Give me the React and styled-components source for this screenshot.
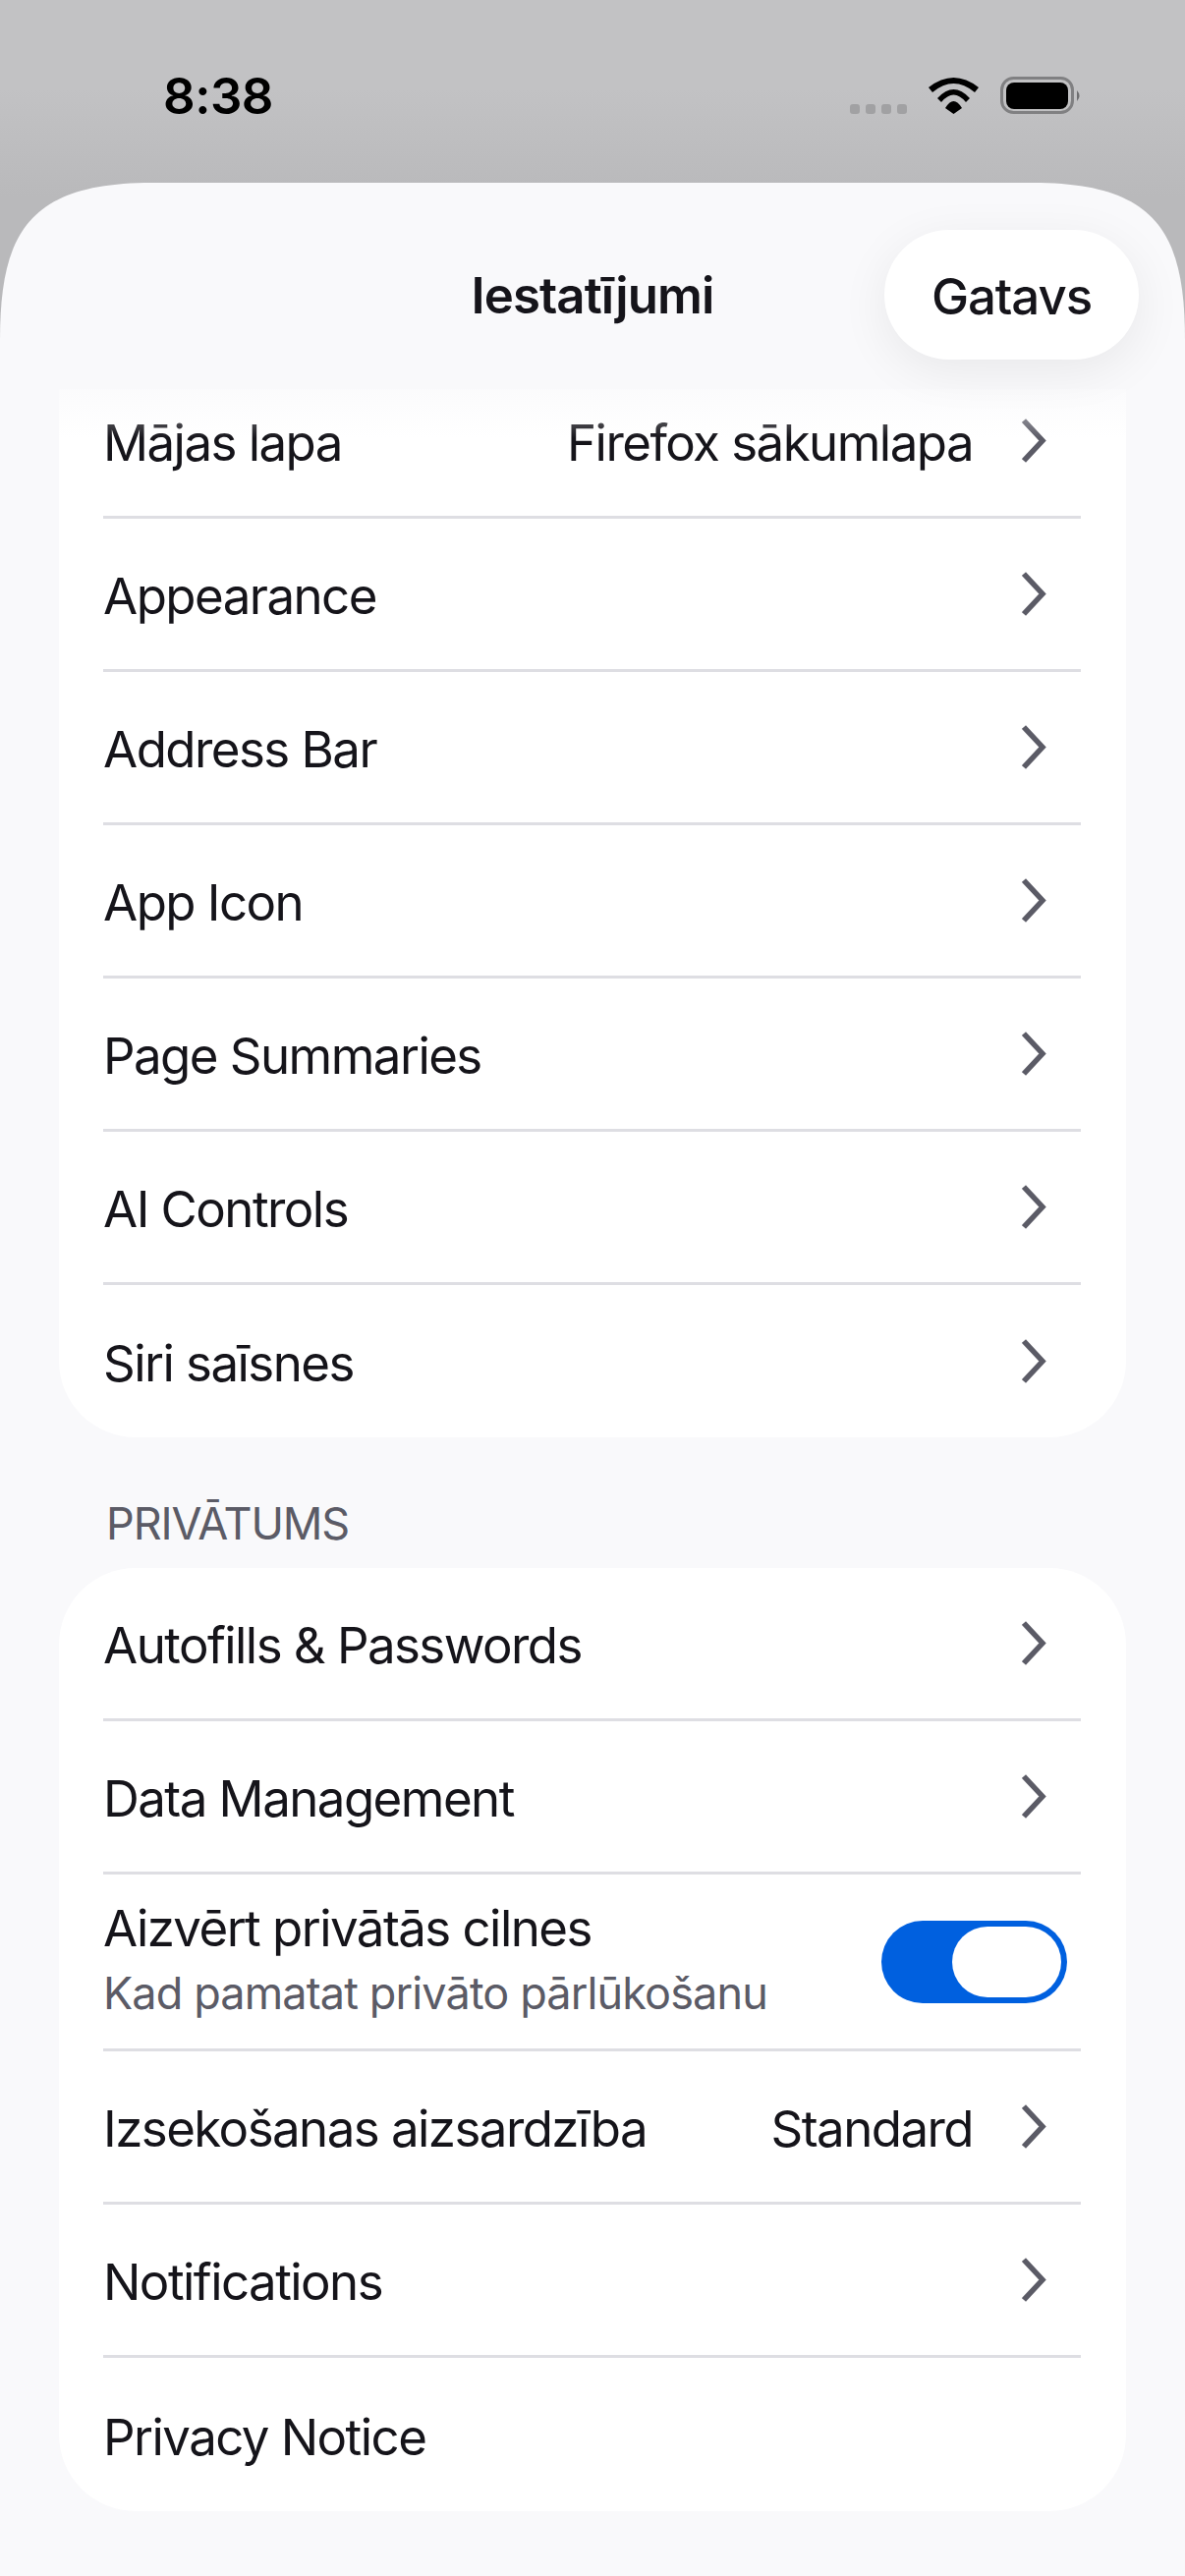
import React from "react";
import styled, { createGlobalStyle } from "styled-components";

const GlobalStyle = createGlobalStyle`
  html, body {
    margin: 0;
    padding: 0;
    background: #f9f9fb;
  }
  body {
    font-family: "Inter", "Liberation Sans", sans-serif;
    -webkit-font-smoothing: antialiased;
  }
`;

const Screen = styled.div`
  position: relative;
  width: 1206px;
  height: 2622px;
  overflow: hidden;
  display: flex;
  flex-direction: column;
  background: linear-gradient(#c2c2c4 0, #c2c2c4 90px, #b9b9bb 200px);
`;

const StatusBar = styled.div`
  height: 186px;
  flex: none;
  box-sizing: border-box;
  padding: 70px 105px 0 166px;
  display: flex;
  justify-content: space-between;
  align-items: flex-start;
`;

const Time = styled.div`
  font-size: 51px;
  font-weight: 600;
  line-height: 56px;
  letter-spacing: -0.5px;
  color: #000;
`;

const StatusIcons = styled.div`
  display: flex;
  align-items: flex-start;
  padding-top: 6px;
`;

// squircle top corners, a plain border-radius is too round here
const Sheet = styled.div`
  position: relative;
  flex: 1;
  min-height: 0;
  display: flex;
  flex-direction: column;
  background: #f9f9fb;
  clip-path: path("M0 160 C0 50 30 0 155 0 H1051 C1176 0 1206 50 1206 160 V2436 H0 Z");
`;

const NavBar = styled.div`
  position: relative;
  z-index: 2;
  flex: none;
  height: 210px;
  box-sizing: border-box;
  padding: 48px 47px 0 0;
  display: flex;
  justify-content: flex-end;
  align-items: flex-start;
`;

const NavTitle = styled.div`
  position: absolute;
  left: 0;
  right: 0;
  top: 85px;
  text-align: center;
  font-size: 51px;
  line-height: 60px;
  font-weight: 600;
  letter-spacing: -0.9px;
  color: #15141a;
`;

const DoneButton = styled.button`
  width: 259px;
  height: 132px;
  border: 0;
  border-radius: 66px;
  background: #fff;
  font-family: inherit;
  font-size: 51px;
  font-weight: 500;
  letter-spacing: -1.1px;
  color: #15141a;
  padding: 2px 0 0;
  box-shadow: 0 12px 50px rgba(0, 0, 0, 0.07);
`;

const Fade = styled.div`
  position: absolute;
  z-index: 1;
  left: 0;
  right: 0;
  top: 210px;
  height: 50px;
  background: linear-gradient(rgba(249, 249, 251, 0.7), rgba(249, 249, 251, 0));
`;

const Content = styled.div`
  flex: 1;
  min-height: 0;
  overflow: hidden;
  padding: 0 60px;
`;

const Card = styled.div`
  background: #fff;
  border-radius: ${(p) => (p.$clipped ? "0 0 78px 78px" : "78px")};
  padding: 0 46px 0 45px;
  margin-top: ${(p) => (p.$clipped ? "-24px" : "0")};
`;

const Row = styled.div`
  height: ${(p) => p.$height || 156}px;
  box-sizing: border-box;
  display: flex;
  align-items: center;
  justify-content: space-between;
  border-bottom: ${(p) => (p.$last ? "0" : "3px solid #dedee3")};
`;

const Label = styled.div`
  font-size: 51px;
  line-height: 60px;
  letter-spacing: -1.55px;
  color: #15141a;
  white-space: nowrap;
  padding-top: ${(p) => (p.$stacked ? "0" : "5px")};
`;

const LabelStack = styled.div`
  display: flex;
  flex-direction: column;
  gap: 9px;
  margin-top: -4px;
`;

const Hint = styled.div`
  font-size: 45px;
  line-height: 54px;
  letter-spacing: -0.87px;
  color: #5b5b66;
  white-space: nowrap;
`;

const Trailing = styled.div`
  display: flex;
  align-items: center;
`;

const Value = styled.div`
  font-size: 51px;
  line-height: 60px;
  letter-spacing: -1.55px;
  color: #15141a;
  white-space: nowrap;
  margin: 5px 50px 0 0;
`;

const ChevronBox = styled.svg`
  display: block;
  width: 25px;
  height: 45px;
  margin-right: 35px;
`;

const SectionTitle = styled.div`
  height: 133px;
  box-sizing: border-box;
  padding: 61px 0 0 48px;
  font-size: 45px;
  line-height: 54px;
  letter-spacing: -1.1px;
  color: #5b5b66;
`;

const Toggle = styled.div`
  width: 189px;
  height: 84px;
  box-sizing: border-box;
  margin-right: 14px;
  padding: 6px;
  border-radius: 42px;
  background: #0060df;
  display: flex;
  justify-content: flex-end;
`;

const Knob = styled.div`
  width: 111px;
  height: 72px;
  border-radius: 36px;
  background: #fff;
`;

function Chevron() {
  return (
    <ChevronBox viewBox="0 0 25 45">
      <path d="M2 2 L21 22.5 L2 43" fill="none" stroke="#5b5b66" strokeWidth="5.5" />
    </ChevronBox>
  );
}

function SettingsRow({ label, value, chevron = true, height, last }) {
  return (
    <Row $height={height} $last={last}>
      <Label>{label}</Label>
      <Trailing>
        {value && <Value>{value}</Value>}
        {chevron && <Chevron />}
      </Trailing>
    </Row>
  );
}

function StatusGlyphs() {
  return (
    <StatusIcons>
      <svg width="236" height="42" viewBox="0 0 236 42">
        <g fill="#a1a1a3">
          <rect x="0" y="30" width="10" height="10" rx="3" />
          <rect x="16" y="30" width="10" height="10" rx="3" />
          <rect x="32" y="30" width="10" height="10" rx="3" />
          <rect x="48" y="30" width="10" height="10" rx="3" />
        </g>
        <g fill="#000">
          <path d="M80 13 Q105.5 -7 131 13 L127 18 Q105.5 0 84 18 Z" />
          <path d="M89 24 Q105.5 6 122 24 L118 28 Q105.5 13 93 28 Z" />
          <path d="M97 34 Q105.5 20 114 34 L105.5 40 Z" />
        </g>
        <rect x="154.5" y="3.5" width="72" height="35" rx="12" fill="none" stroke="#808082" strokeWidth="3" />
        <rect x="159" y="8" width="63" height="27" rx="8" fill="#000" />
        <path d="M231 16 Q236 21.5 231 27 Z" fill="#6e6e70" />
      </svg>
    </StatusIcons>
  );
}

export default function App() {
  return (
    <>
      <GlobalStyle />
      <Screen>
        <StatusBar>
          <Time>8:38</Time>
          <StatusGlyphs />
        </StatusBar>
        <Sheet>
          <NavBar>
            <NavTitle>Iestatījumi</NavTitle>
            <DoneButton>Gatavs</DoneButton>
          </NavBar>
          <Fade />
          <Content>
            <Card $clipped>
              <SettingsRow label="Mājas lapa" value="Firefox sākumlapa" />
              <SettingsRow label="Appearance" />
              <SettingsRow label="Address Bar" />
              <SettingsRow label="App Icon" />
              <SettingsRow label="Page Summaries" />
              <SettingsRow label="AI Controls" />
              <SettingsRow label="Siri saīsnes" height={155} last />
            </Card>
            <SectionTitle>PRIVĀTUMS</SectionTitle>
            <Card>
              <SettingsRow label="Autofills & Passwords" />
              <SettingsRow label="Data Management" />
              <Row $height={180}>
                <LabelStack>
                  <Label $stacked>Aizvērt privātās cilnes</Label>
                  <Hint>Kad pamatat privāto pārlūkošanu</Hint>
                </LabelStack>
                <Toggle>
                  <Knob />
                </Toggle>
              </Row>
              <SettingsRow label="Izsekošanas aizsardzība" value="Standard" />
              <SettingsRow label="Notifications" />
              <SettingsRow label="Privacy Notice" chevron={false} last />
            </Card>
          </Content>
        </Sheet>
      </Screen>
    </>
  );
}
